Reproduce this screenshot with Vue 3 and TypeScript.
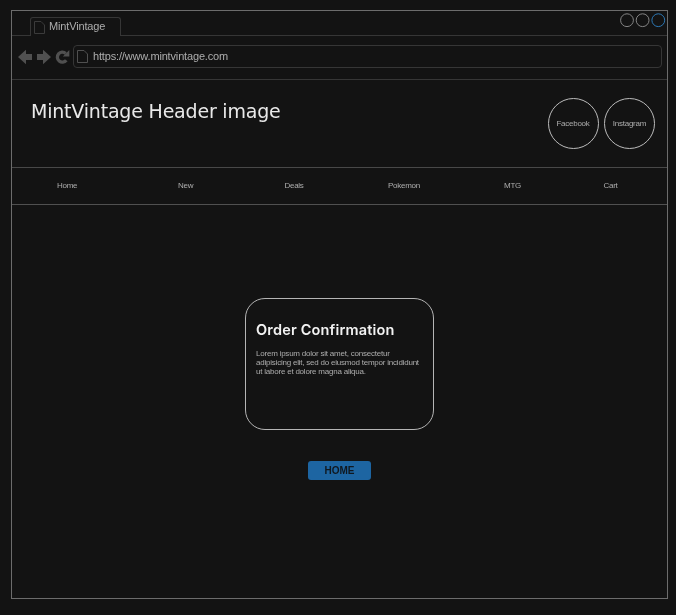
<script setup lang="ts">
interface NavItem {
  label: string
  slot: string
}

const navItems: NavItem[] = [
  { label: 'Home', slot: 'home' },
  { label: 'New', slot: 'new' },
  { label: 'Deals', slot: 'deals' },
  { label: 'Pokemon', slot: 'pokemon' },
  { label: 'MTG', slot: 'mtg' },
  { label: 'Cart', slot: 'cart' },
]
const socials: string[] = ['Facebook', 'Instagram']
const orderLines: string[] = [
  'Lorem ipsum dolor sit amet, consectetur',
  'adipisicing elit, sed do eiusmod tempor incididunt',
  'ut labore et dolore magna aliqua.',
]
</script>

<template>
  <div class="page">
    <div class="window">
      <div class="tabs">
        <div class="tab-lead"></div>
        <div class="tab">
          <svg class="doc" width="11" height="13" viewBox="0 0 11 13">
            <path d="M.5.5H7L10.5 4V12.5H.5Z" />
          </svg>
          <span class="tab-title">MintVintage</span>
        </div>
        <div class="tab-rest">
          <svg class="controls" width="46" height="15" viewBox="0 0 46 15">
            <circle cx="7" cy="7.2" r="6.4" />
            <circle cx="22.6" cy="7.2" r="6.4" />
            <circle class="active" cx="38.3" cy="7.2" r="6.4" />
          </svg>
        </div>
      </div>
      <div class="toolbar">
        <svg class="nav-icons" width="53" height="16" viewBox="0 0 53 16">
          <path d="M0 8L8 .7V5H14V11H8V15.3Z" />
          <path d="M33 8L25 .7V5H19V11H25V15.3Z" />
          <path class="reload" d="M48.3 11.2A5 5 0 1 1 47.7 4.4" />
          <path d="M51.3 1V7.5H44.8Z" />
        </svg>
        <div class="address">
          <svg class="doc bright" width="11" height="13" viewBox="0 0 11 13">
            <path d="M.5.5H7L10.5 4V12.5H.5Z" />
          </svg>
          <span class="url">https://www.mintvintage.com</span>
        </div>
      </div>
      <header class="header">
        <h1>MintVintage Header image</h1>
        <div class="socials">
          <div v-for="name in socials" :key="name" class="social">{{ name }}</div>
        </div>
      </header>
      <nav class="nav">
        <a v-for="item in navItems" :key="item.slot" :class="item.slot">{{ item.label }}</a>
      </nav>
      <main class="main">
        <section class="card">
          <h2>Order Confirmation</h2>
          <p><span v-for="line in orderLines" :key="line">{{ line }}</span></p>
        </section>
        <button class="home-button">HOME</button>
      </main>
    </div>
  </div>
</template>

<style>
body {
  background: #131313;
}
</style>

<style scoped>
* {
  box-sizing: border-box;
}
.page {
  width: 676px;
  height: 615px;
  padding: 10px 8px 16px 11px;
  background: #131313;
  font-family: "Liberation Sans", Arial, sans-serif;
  color: #adadad;
}
.window {
  width: 657px;
  height: 589px;
  border: 1px solid #6c6c6c;
  display: flex;
  flex-direction: column;
  will-change: opacity;
}
.tabs {
  height: 25px;
  display: flex;
  align-items: stretch;
  flex: none;
}
.tab-lead {
  width: 18px;
  border-bottom: 1px solid #363636;
}
.tab {
  width: 92px;
  height: 19px;
  margin-top: 6px;
  border: 1px solid #363636;
  border-bottom: 0;
  border-radius: 3px 3px 0 0;
  display: flex;
  padding: 3px 0 0 3px;
}
.doc {
  flex: none;
  fill: none;
  stroke: #3b3b3b;
}
.doc.bright {
  stroke: #505050;
}
.tab-title {
  margin-left: 4px;
  font-size: 11px;
  line-height: 11px;
  letter-spacing: -0.15px;
  white-space: nowrap;
}
.tab-rest {
  flex: 1;
  margin-left: -1px;
  border-bottom: 1px solid #363636;
  display: flex;
  justify-content: flex-end;
  padding: 2px 1px 0 0;
}
.tab {
  width: 91px;
}
.tab-rest {
  margin-left: 0;
}
.controls {
  fill: none;
  stroke: #858585;
}
.controls .active {
  stroke: #2d78b4;
}
.toolbar {
  height: 44px;
  flex: none;
  border-bottom: 1px solid #363636;
  display: flex;
  padding: 9px 5px 0 6px;
}
.nav-icons {
  margin-top: 4px;
  flex: none;
  fill: #505050;
}
.nav-icons .reload {
  fill: none;
  stroke: #505050;
  stroke-width: 3.3;
}
.address {
  flex: 1;
  height: 23px;
  margin-left: 2px;
  border: 1px solid #363636;
  border-radius: 4px;
  display: flex;
  padding: 4px 0 0 3px;
}
.url {
  margin-left: 5px;
  font-size: 11px;
  line-height: 13px;
  letter-spacing: -0.16px;
  white-space: nowrap;
}
.header {
  height: 88px;
  flex: none;
  border-bottom: 1px solid #484848;
  display: flex;
  justify-content: space-between;
  padding: 18px 12px 0 19px;
}
h1 {
  margin: 0;
  font: 400 19px/26px "DejaVu Sans", sans-serif;
  letter-spacing: -0.2px;
  color: #e9e9e9;
  white-space: nowrap;
}
.socials {
  display: flex;
  gap: 5.5px;
}
.social {
  width: 51px;
  height: 51px;
  border: 1px solid #bcbcbc;
  border-radius: 50%;
  display: flex;
  align-items: center;
  justify-content: center;
  font-size: 8px;
  letter-spacing: -0.25px;
}
.nav {
  height: 37px;
  flex: none;
  border-bottom: 1px solid #505050;
  display: grid;
  grid-template-columns: 121px 106.5px 103.5px 116px 99.5px auto;
  padding: 0 0 1px 45px;
  align-items: center;
  font-size: 8px;
  letter-spacing: -0.27px;
}
.main {
  flex: 1;
  display: flex;
  flex-direction: column;
  align-items: center;
  padding-top: 93px;
}
.card {
  width: 189px;
  height: 132px;
  border: 1px solid #b5b5b5;
  border-radius: 20px;
  padding: 22px 10px 0;
}
h2 {
  margin: 0;
  font: 600 14.5px/18px Inter, sans-serif;
  letter-spacing: 0.17px;
  color: #f2f2f2;
  white-space: nowrap;
}
p {
  margin: 10px 0 0;
  font-size: 8px;
  line-height: 9px;
  letter-spacing: -0.22px;
}
p span {
  display: block;
  white-space: nowrap;
}
.home-button {
  width: 63px;
  height: 19px;
  margin-top: 31px;
  padding: 0;
  border: 0;
  border-radius: 3px;
  background: #1d65a2;
  color: #101820;
  font: 700 10px/19px "Liberation Sans", sans-serif;
}
</style>
